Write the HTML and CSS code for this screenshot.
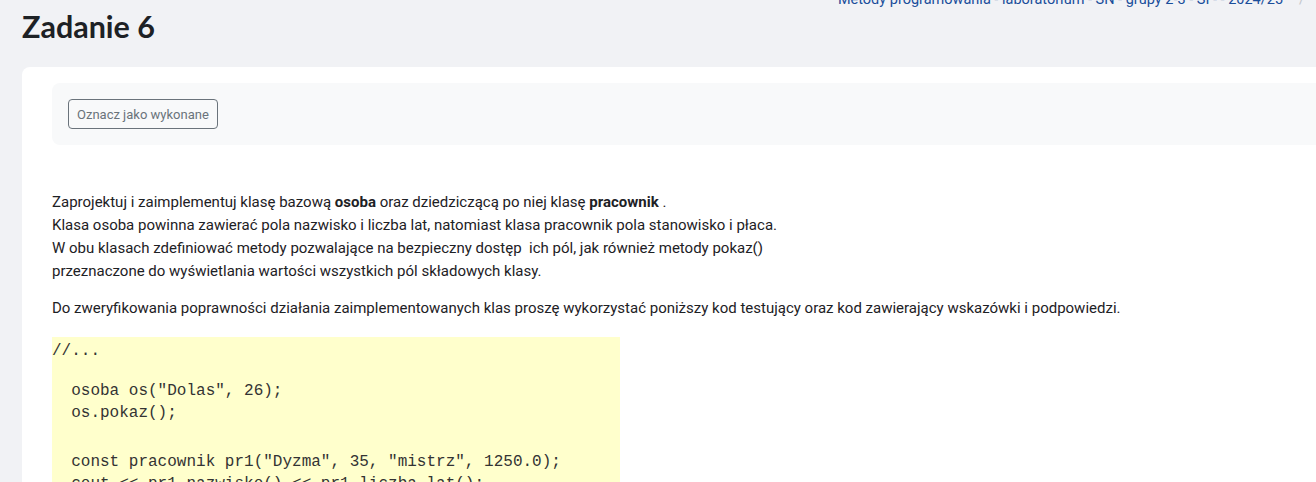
FILE: index.html
```html
<!DOCTYPE html>
<html lang="pl">
<head>
<meta charset="utf-8">
<title>Zadanie 6</title>
<link rel="stylesheet" href="styles.css">
</head>
<body>
<div class="page">
  <header class="page-header">
    <h1 class="title">Zadanie 6</h1>
    <nav class="breadcrumb">
      <a href="#">Metody programowania - laboratorium - SN - grupy 2-3 - SI - - 2024/25</a>
      <span class="divider">/</span>
    </nav>
  </header>
  <main class="card">
    <div class="completion">
      <button class="btn-outline" type="button">Oznacz jako wykonane</button>
    </div>
    <div class="content">
      <p>Zaprojektuj i zaimplementuj klasę bazową <strong>osoba</strong> oraz dziedziczącą po niej klasę <strong>pracownik</strong> .<br>
      Klasa osoba powinna zawierać pola nazwisko i liczba lat, natomiast klasa pracownik pola stanowisko i płaca.<br>
      W obu klasach zdefiniować metody pozwalające na bezpieczny dostęp&nbsp; ich pól, jak również metody pokaz()<br>
      przeznaczone do wyświetlania wartości wszystkich pól składowych klasy.</p>
      <p>Do zweryfikowania poprawności działania zaimplementowanych klas proszę wykorzystać poniższy kod testujący oraz kod zawierający wskazówki i podpowiedzi.</p>
      <div class="code">
        <div class="line">//...</div>
        <div class="blank blank-a"></div>
        <div class="line">  osoba os("Dolas", 26);</div>
        <div class="line">  os.pokaz();</div>
        <div class="blank blank-b"></div>
        <div class="line">  const pracownik pr1("Dyzma", 35, "mistrz", 1250.0);</div>
        <div class="line">  cout &lt;&lt; pr1.nazwisko() &lt;&lt; pr1.liczba_lat();</div>
      </div>
    </div>
  </main>
</div>
</body>
</html>
```
FILE: styles.css
```css
html, body {
  margin: 0;
  padding: 0;
}
body {
  background: #f1f2f5;
  font-family: Roboto, "Liberation Sans", Arial, sans-serif;
  color: #1d2125;
  overflow: hidden;
  height: 482px;
}
.page {
  padding-left: 22px;
}
.page-header {
  display: flex;
  justify-content: space-between;
  align-items: flex-start;
  height: 67px;
}
.title {
  margin: 8px 0 0 0;
  font-family: Lato, Roboto, sans-serif;
  font-weight: 700;
  font-size: 30.5px;
  line-height: 36px;
  color: #1d2125;
}
.breadcrumb {
  display: flex;
  gap: 16px;
  margin-top: -11px;
  margin-right: 11px;
  font-size: 14.5px;
  line-height: 22px;
  white-space: nowrap;
}
.breadcrumb a {
  color: #1a4e9b;
  text-decoration: none;
}
.breadcrumb .divider {
  color: #c4c7cc;
}
.card {
  background: #fff;
  border-radius: 8px 0 0 0;
  padding: 16px 0 0 30px;
  height: 420px;
}
.completion {
  background: #f8f9fa;
  border-radius: 8px 0 0 8px;
  padding: 16px;
  height: 30px;
}
.btn-outline {
  display: block;
  height: 30px;
  padding: 0 8px;
  border: 1px solid #6a737b;
  border-radius: 4px;
  background: transparent;
  color: #6a737b;
  font-family: Roboto, "Liberation Sans", sans-serif;
  font-size: 13px;
}
.content {
  padding-top: 46px;
  font-size: 15px;
  line-height: 23px;
}
.content p {
  margin: 0 0 14px 0;
}
.content strong {
  font-weight: 700;
}
.code {
  width: 568px;
  background: #ffffcc;
  font-family: "Liberation Mono", "Courier New", monospace;
  font-size: 16px;
  color: #333;
  padding-top: 3px;
  margin-top: 17px;
}
.code .line {
  white-space: pre;
  line-height: 22px;
}
.code .blank-a {
  height: 18px;
}
.code .blank-b {
  height: 27px;
}
```
